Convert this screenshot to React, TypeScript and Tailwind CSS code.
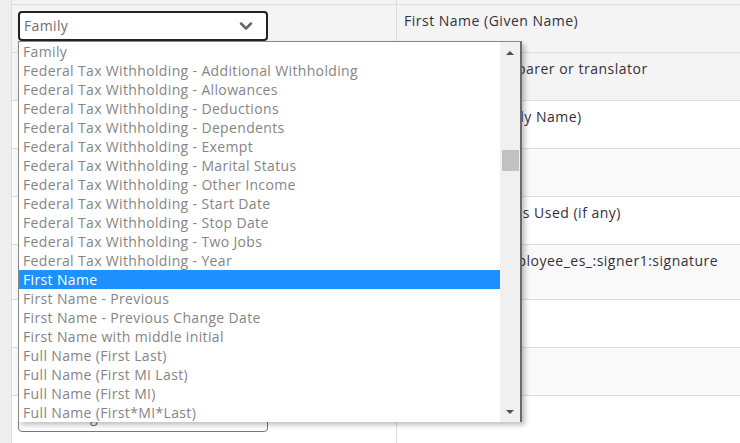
import React from 'react'
import { ChevronDown } from 'lucide-react'

const rows = [
  { h: 'h-[48px]', bg: 'bg-[#f4f4f4]', field: 'Family', label: 'First Name (Given Name)' },
  { h: 'h-[48px]', bg: 'bg-[#f4f4f4]', field: 'Preparer Name', label: 'Signature of preparer or translator' },
  { h: 'h-[48px]', bg: 'bg-white', field: 'Last Name', label: 'Last Name (Family Name)' },
  { h: 'h-[48px]', bg: 'bg-[#f9f9f9]', field: 'Middle Initial', label: 'Middle Initial' },
  { h: 'h-[48px]', bg: 'bg-white', field: 'Last Name - Previous', label: 'Other Last Names Used (if any)' },
  { h: 'h-[55px]', bg: 'bg-[#f9f9f9]', field: 'Signature', label: 'Signature by Employee_es_:signer1:signature' },
  { h: 'h-[48px]', bg: 'bg-white', field: 'Date of Birth', label: 'Date of Birth' },
  { h: 'h-[48px]', bg: 'bg-[#f9f9f9]', field: 'Email Address', label: 'Email' },
  { h: 'h-[48px]', bg: 'bg-white', field: 'Date of Signature', label: 'Today' },
]

const options = [
  'Family',
  'Federal Tax Withholding - Additional Withholding',
  'Federal Tax Withholding - Allowances',
  'Federal Tax Withholding - Deductions',
  'Federal Tax Withholding - Dependents',
  'Federal Tax Withholding - Exempt',
  'Federal Tax Withholding - Marital Status',
  'Federal Tax Withholding - Other Income',
  'Federal Tax Withholding - Start Date',
  'Federal Tax Withholding - Stop Date',
  'Federal Tax Withholding - Two Jobs',
  'Federal Tax Withholding - Year',
  'First Name',
  'First Name - Previous',
  'First Name - Previous Change Date',
  'First Name with middle initial',
  'Full Name (First Last)',
  'Full Name (First MI Last)',
  'Full Name (First MI)',
  'Full Name (First*MI*Last)',
]

const SelectBox: React.FC<{ value: string; focused?: boolean }> = ({ value, focused }) => (
  <div
    className={
      focused
        ? 'flex items-center justify-between w-[250px] h-[30px] pl-[4px] pr-[10px] bg-white border-2 border-[#222] rounded-[4px]'
        : 'flex items-center justify-between w-[250px] h-[30px] pl-[5px] pr-[11px] bg-white border border-[#777] rounded-[4px]'
    }
  >
    <span className="mb-[1px] text-[14px] text-[#707070] truncate">{value}</span>
    <ChevronDown className="w-[20px] h-[20px] text-[#666]" strokeWidth={3} />
  </div>
)

export default function App() {
  return (
    <div className="relative w-[740px] h-[443px] overflow-hidden bg-white flex font-['Open_Sans',sans-serif] tracking-[0.35px]">
      <div className="w-[12px] shrink-0 bg-[#eeeeee] border-r border-[#dcdcdc]" />
      <div className="flex-1 flex flex-col">
        <div className="h-[5px] shrink-0 bg-[#f4f4f4] border-b border-[#dcdcdc] flex">
          <div className="w-[385px] border-r border-[#dcdcdc]" />
        </div>
        {rows.map((r, i) => (
          <div key={i} className={`${r.h} ${r.bg} shrink-0 flex border-b border-[#dcdcdc]`}>
            <div className="w-[385px] shrink-0 pl-[6px] pt-[6px] border-r border-[#dcdcdc]">
              <SelectBox value={r.field} focused={i === 0} />
            </div>
            <div className="flex-1 pl-[7px] pt-[6px] text-[14px] tracking-[0.5px] text-[#33303a] leading-[20px]">{r.label}</div>
          </div>
        ))}
      </div>

      <div className="absolute left-[18px] top-[41px] w-[504px] h-[381px] flex bg-white border-l border-t border-[#888] border-r-2 border-r-[#6a6a6a] shadow-[3px_3px_5px_rgba(0,0,0,0.25)]">
        <div className="flex-1 flex flex-col">
          {options.map((o) => (
            <div
              key={o}
              className={
                o === 'First Name'
                  ? 'h-[19px] shrink-0 pl-[4px] text-[14px] leading-[19px] bg-[#1e90ff] text-white'
                  : 'h-[19px] shrink-0 pl-[4px] text-[14px] leading-[19px] text-[#858585]'
              }
            >
              {o}
            </div>
          ))}
        </div>
        <div className="w-[20px] shrink-0 bg-[#f0f0f0] flex flex-col items-center">
          <div className="mt-[9px] w-0 h-0 border-l-[4px] border-r-[4px] border-b-[4px] border-l-transparent border-r-transparent border-b-[#505050]" />
          <div className="mt-[95px] w-[17px] h-[21px] bg-[#c1c1c1]" />
          <div className="mt-auto mb-[8px] w-0 h-0 border-l-[4px] border-r-[4px] border-t-[4px] border-l-transparent border-r-transparent border-t-[#505050]" />
        </div>
      </div>
    </div>
  )
}
